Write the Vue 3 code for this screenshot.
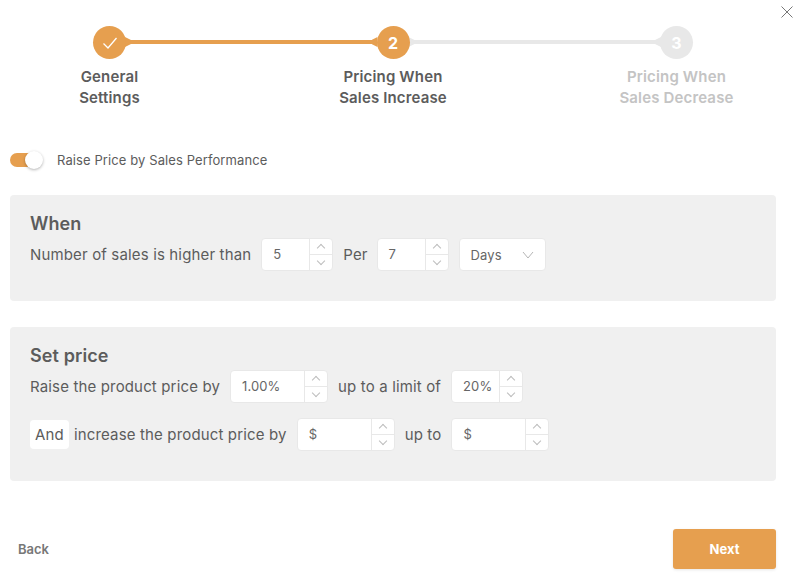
<template>
  <div class="wizard">
    <button class="close" title="Close">
      <svg width="14" height="14" viewBox="0 0 14 14"><path d="M1.5 1.5l11 11M12.5 1.5l-11 11" fill="none" stroke="#777" stroke-width="1" /></svg>
    </button>

    <div class="stepper">
      <template v-for="(s, i) in steps" :key="s.label + s.label2">
        <div class="step" :class="s.state">
          <div class="dot">
            <svg v-if="s.state === 'done'" width="16" height="14" viewBox="0 0 16 14"><path d="M1.5 7.5l4.5 4.5 8.5-10" fill="none" stroke="#fff" stroke-width="1.3" /></svg>
            <span v-else>{{ i + 1 }}</span>
          </div>
          <div class="step-label">{{ s.label }}<br />{{ s.label2 }}</div>
        </div>
        <div v-if="i < steps.length - 1" class="link" :class="{ active: s.state === 'done' }"></div>
      </template>
    </div>

    <div class="switch-row">
      <span class="switch"><span class="knob"></span></span>
      <span class="switch-label">Raise Price by Sales Performance</span>
    </div>

    <section class="panel panel-when">
      <h3 class="panel-title">When</h3>
      <div class="line">
        <span>Number of sales is higher than</span>
        <div class="num w72"><span class="val">5</span><div class="spin"><i class="up"></i><i class="down"></i></div></div>
        <span class="per">Per</span>
        <div class="num w72"><span class="val">7</span><div class="spin"><i class="up"></i><i class="down"></i></div></div>
        <div class="select">
          <span>Days</span>
          <svg width="12" height="8" viewBox="0 0 12 8"><path d="M1 1l5 6 5-6" fill="none" stroke="#b5b5b5" stroke-width="1" /></svg>
        </div>
      </div>
    </section>

    <section class="panel panel-price">
      <h3 class="panel-title">Set price</h3>
      <div class="line">
        <span>Raise the product price by</span>
        <div class="num w98"><span class="val">1.00%</span><div class="spin"><i class="up"></i><i class="down"></i></div></div>
        <span>up to a limit of</span>
        <div class="num w72"><span class="val">20%</span><div class="spin"><i class="up"></i><i class="down"></i></div></div>
      </div>
      <div class="line second">
        <span class="and">And</span>
        <span class="after-and">increase the product price by</span>
        <div class="num w98"><span class="val">$</span><div class="spin"><i class="up"></i><i class="down"></i></div></div>
        <span>up to</span>
        <div class="num w98"><span class="val">$</span><div class="spin"><i class="up"></i><i class="down"></i></div></div>
      </div>
    </section>

    <div class="footer">
      <button class="back">Back</button>
      <button class="next">Next</button>
    </div>
  </div>
</template>

<script setup>
const steps = [
  { label: 'General', label2: 'Settings', state: 'done' },
  { label: 'Pricing When', label2: 'Sales Increase', state: 'current' },
  { label: 'Pricing When', label2: 'Sales Decrease', state: 'todo' },
]
</script>

<style>
html, body { background: #fff; }
</style>

<style scoped>
.wizard{position:relative;width:800px;height:580px;overflow:hidden;background:#fff;font-family:Inter,"Liberation Sans",sans-serif;color:#5c5c5c}
.close{position:absolute;top:5px;right:6px;width:14px;height:14px;padding:0;border:none;background:none;display:block}
.close svg{display:block}

.stepper{display:flex;align-items:flex-start;box-sizing:border-box;padding:26px 107px 0 93px;height:108px}
.step{width:33px;flex:none;display:flex;flex-direction:column;align-items:center}
.dot{width:33px;height:33px;border-radius:50%;display:flex;align-items:center;justify-content:center;color:#fff;font-size:16px;font-weight:700;position:relative;z-index:1}
.step.done .dot,.step.current .dot{background:#e69f4f}
.step.todo .dot{background:#e8e8e8}
.step-label{margin-top:7px;font-size:15px;line-height:21px;font-weight:600;letter-spacing:.15px;text-align:center;white-space:nowrap;color:#5c5c5c}
.step.todo .step-label{color:#c4c4c4}
.link{flex:1;height:4px;margin-top:14px;background:#e8e8e8;position:relative}
.link.active{background:#e69f4f}
.link::before,.link::after{content:"";position:absolute;top:-3px;width:6px;height:10px;background:inherit}
.link::before{left:-1px;clip-path:polygon(0 0,100% 30%,100% 70%,0 100%)}
.link::after{right:-1px;clip-path:polygon(0 30%,100% 0,100% 100%,0 70%)}

.switch-row{display:flex;align-items:center;margin:42px 0 0 10px;height:20px}
.switch{position:relative;width:32px;height:14px;border-radius:7px;background:#e69f4f;flex:none}
.knob{position:absolute;top:-2px;right:-1px;width:18px;height:18px;border-radius:50%;background:#fff;box-shadow:0 1px 3px rgba(0,0,0,.3)}
.switch-label{margin-left:15px;font-size:13px;letter-spacing:.1px}

.panel{margin:0 24px 0 10px;background:#f0f0f0;border-radius:4px;padding:18px 20px 0;box-sizing:border-box}
.panel-when{margin-top:25px;height:106px}
.panel-price{margin-top:26px;height:154px}
.panel-title{margin:0;font-size:18px;line-height:22px;font-weight:600;letter-spacing:.1px;color:#5c5c5c}
.line{display:flex;align-items:center;gap:10px;margin-top:3px;font-size:15px;letter-spacing:.15px;height:33px}
.line.second{margin-top:15px;gap:10px}
.per{margin-right:-1px}
.and{width:39px;height:29px;background:#fff;border-radius:4px;display:flex;align-items:center;justify-content:center}
.after-and{margin-left:-5px}

.num{display:flex;height:33px;background:#fff;border:1px solid #e8e8e8;border-radius:4px;box-sizing:border-box;flex:none}
.w72{width:72px}
.w98{width:98px}
.val{flex:1;padding-left:11px;line-height:31px;font-size:13px;letter-spacing:.1px;color:#666}
.spin{width:22px;border-left:1px solid #e8e8e8;display:flex;flex-direction:column}
.spin i{flex:1;position:relative;display:block}
.spin .up{border-bottom:1px solid #e8e8e8}
.spin i::after{content:"";position:absolute;left:8px;width:5px;height:5px;border-left:1px solid #bdbdbd;border-top:1px solid #bdbdbd}
.spin .up::after{top:6px;transform:rotate(45deg)}
.spin .down::after{top:3px;transform:rotate(225deg)}

.select{width:87px;height:33px;box-sizing:border-box;background:#fff;border:1px solid #e8e8e8;border-radius:4px;display:flex;align-items:center;justify-content:space-between;padding:0 11px;font-size:13px;letter-spacing:.1px;color:#666;flex:none}

.footer{display:flex;align-items:center;justify-content:space-between;margin:48px 24px 0 18px}
.back{border:none;background:none;padding:0;font:600 13px Inter,"Liberation Sans",sans-serif;color:#777}
.next{width:103px;height:40px;border:none;border-radius:3px;background:#e69f4f;color:#fff;font:700 13px Inter,"Liberation Sans",sans-serif;box-shadow:0 1px 3px rgba(0,0,0,.1)}
</style>
